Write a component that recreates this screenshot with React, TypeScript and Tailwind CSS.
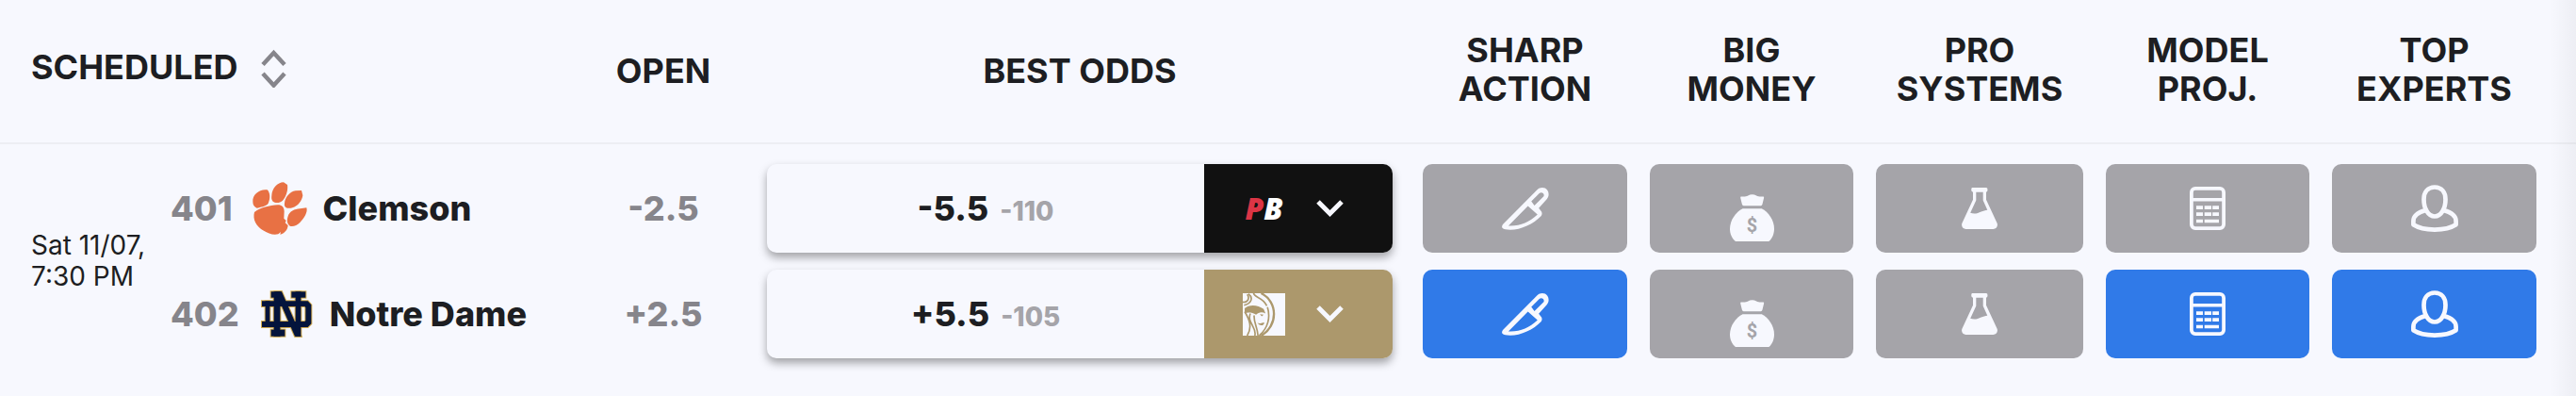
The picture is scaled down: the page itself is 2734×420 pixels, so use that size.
import React from 'react';

type SignalKey = 'sharp' | 'money' | 'systems' | 'model' | 'experts';

interface Team {
  rotation: number;
  name: string;
  logo: React.ReactNode;
  open: string;
  line: string;
  price: string;
  book: string;
  bookClass: string;
  bookLogo: React.ReactNode;
  active: SignalKey[];
}

const SortIcon = () => (
  <svg width="27" height="43" viewBox="0 0 27 43" fill="none" stroke="#86858b" strokeWidth="4.500" aria-hidden="true">
    <path d="M2 18.500 13.500 6 25 18.500M2 28 13.500 40.500 25 28" />
  </svg>
);

const ChevronIcon = () => (
  <svg width="29" height="19" viewBox="0 0 29 19" fill="none" stroke="#f7f8fe" strokeWidth="5" aria-hidden="true">
    <path d="M2 2 14.500 14.500 27 2" />
  </svg>
);

const KnifeIcon = () => (
  <svg width="50" height="45" viewBox="98 86 152 137" fill="#f7f8fe" fillRule="evenodd" aria-hidden="true">
    <path d="M101 205 212 93C221 84 237 84 245 94C251 103 250 115 243 123L217 152L226 164C228 168 228 172 225 177C200 203 160 222 125 222C112 221 104 221 100 217C97 213 98 209 101 205ZM119 209 182 145 213 173C185 199 155 211 119 209ZM193 130 219 104C227 98 237 106 233 114L203 144Z" />
  </svg>
);

const MoneyIcon = () => (
  <svg width="47" height="70" viewBox="824 47 142 211" fill="#f7f8fe" aria-hidden="true">
    <path d="M860 115C868 115 876 116 882 112C890 107 901 107 909 112C915 116 923 115 931 115Q934 115 933 119L928 140Q927 144 923 144H868Q864 144 863 140L858 119Q857 115 860 115Z" />
    <path d="M865 153H926C948 164 966 190 966 218C966 235 959 250 949 258H842C831 249 824 235 824 218C824 190 843 164 865 153Z" />
    <text x="895" y="228" textAnchor="middle" fontSize="60" fill="#a5a4a9" className="font-['Roboto',sans-serif] font-bold">
      $
    </text>
  </svg>
);

const FlaskIcon = () => (
  <svg width="38" height="44" viewBox="0 0 38 44" fill="#f7f8fe" fillRule="evenodd" aria-hidden="true">
    <path d="M11.500 0H26Q27.500 0 27.500 2.300T26 4.700V12.700L37.500 37.500C39 41 36.500 44 33.500 44H4.500C1.500 44-1 41 .5 37.500L12 12.700V4.700Q10.200 4.700 10.200 2.300T11.500 0ZM15.300 4.700V13.500L9.200 26.800C13 28.200 17 27.500 20.700 25.500C23 24.500 25 24.200 27.300 23.700L22.700 13.500V4.700Z" />
  </svg>
);

const CalculatorIcon = () => (
  <svg width="38" height="46" viewBox="0 0 38 46" fill="#f7f8fe" aria-hidden="true">
    <rect x="1.900" y="1.900" width="34.200" height="42.200" rx="4" fill="none" stroke="#f7f8fe" strokeWidth="3.800" />
    <path d="M2 12h34v3.600H2zM7 20.300h7V24H7zM15.700 20.300H23V24h-7.300zM24.200 20.300H31V24h-6.800zM7 27.300h7V31H7zM15.700 27.300H23V31h-7.300zM24.200 27.300H31V31h-6.800zM7 34.700h7v3.600H7zM15.700 34.700H31v3.600H15.700z" />
  </svg>
);

const ExpertIcon = () => (
  <svg width="50" height="50" viewBox="0 0 50 50" fill="none" stroke="#f7f8fe" strokeWidth="4.700" aria-hidden="true">
    <path d="M25 2.500C17.500 2.500 13.500 8 13.500 15.500C13.500 25 18 33.500 25 33.500S36.500 25 36.500 15.500C36.500 8 32.500 2.500 25 2.500Z" />
    <path d="M15.500 27C8 29 2.400 33 2.400 38.500V42.300C13 49.300 37 49.300 47.600 42.300V38.500C47.600 33 42 29 34.500 27" strokeLinejoin="round" />
  </svg>
);

const PawLogo = () => (
  <svg width="60" height="58" viewBox="318 66 180 174" fill="#e87144" aria-hidden="true">
    <path d="M322 132C320 108 345 90 368 94C378 104 378 122 371 137C364 147 346 149 335 152C326 148 322 142 322 132Z" />
    <path d="M382 112C383 90 400 70 420 70L432 78C435 96 427 118 417 128C408 137 393 137 386 131C381 126 381 120 382 112Z" />
    <path d="M423 137C424 118 440 100 458 97L477 96L481 112C478 130 466 146 448 151C436 155 420 152 423 137Z" />
    <path d="M327 165C345 151 375 144 402 142C414 142 422 150 422 162L421 185L428 192L425 199L434 207C433 222 422 233 409 236L411 228L403 235C385 239 371 232 357 224C332 211 321 188 327 165Z" />
    <path d="M434 178C438 163 455 155 472 154L493 151C498 166 484 186 472 198C462 208 450 212 440 209C430 201 430 190 434 178Z" />
  </svg>
);

const MonogramBars = () => (
  <>
    <path d="M19 56H165L176 68V128L165 139H19V121H155L158 118V76L155 73H19z" />
    <rect x="30" y="56" width="14" height="83" />
    <rect x="57" y="26" width="20" height="142" />
    <rect x="48" y="26" width="32" height="19" />
    <rect x="48" y="147" width="44" height="21" />
    <path d="M62 26H82L144 168H124z" />
    <rect x="126" y="26" width="17" height="142" />
    <rect x="113" y="26" width="45" height="19" />
  </>
);

const MonogramLogo = () => (
  <svg width="60" height="50" viewBox="7 22 180 150" aria-hidden="true">
    <g fill="#d0a94e" stroke="#d0a94e" strokeWidth="6">
      <MonogramBars />
    </g>
    <g fill="#04143c">
      <MonogramBars />
    </g>
  </svg>
);

const LionLogo = () => (
  <svg width="45" height="45" viewBox="0 0 134 134" aria-hidden="true">
    <path d="M0 0h134v134H0z" fill="#f7f8fe" />
    <g fill="none" stroke="#ac986c" strokeWidth="5">
      <path d="M58 0C112 26 112 104 58 134" strokeWidth="7" />
      <path d="M34 0C38 16 62 10 76 40" />
      <path d="M0 28C18 30 22 14 14 4M18 2C34 14 28 32 4 38" />
      <path d="M6 58C22 84 30 108 14 134M24 64C12 92 46 108 38 134M78 44C88 76 80 110 52 134" />
      <path d="M36 70C34 92 46 104 48 134" />
    </g>
    <path d="M6 48C20 34 48 36 66 50L72 64C60 57 50 60 42 68C30 60 16 60 6 63zM46 94C56 98 60 92 68 92C68 102 56 106 46 94zM54 66L66 68L60 73z" fill="#ac986c" />
  </svg>
);

const signals: { key: SignalKey; label: [string, string]; width: string; icon: React.ReactNode }[] = [
  { key: 'sharp', label: ['Sharp', 'Action'], width: 'w-[241px]', icon: <KnifeIcon /> },
  { key: 'money', label: ['Big', 'Money'], width: 'w-[240px]', icon: <MoneyIcon /> },
  { key: 'systems', label: ['Pro', 'Systems'], width: 'w-[244px]', icon: <FlaskIcon /> },
  { key: 'model', label: ['Model', 'Proj.'], width: 'w-[240px]', icon: <CalculatorIcon /> },
  { key: 'experts', label: ['Top', 'Experts'], width: 'w-[241px]', icon: <ExpertIcon /> },
];

const teams: Team[] = [
  {
    rotation: 401,
    name: 'Clemson',
    logo: <PawLogo />,
    open: '-2.5',
    line: '-5.5',
    price: '-110',
    book: 'PointsBet',
    bookClass: 'bg-[#111111]',
    bookLogo: (
      <span className="font-['Open_Sans',sans-serif] text-[32px] font-extrabold italic text-white">
        <span className="text-[#dc3545]">P</span>B
      </span>
    ),
    active: [],
  },
  {
    rotation: 402,
    name: 'Notre Dame',
    logo: <MonogramLogo />,
    open: '+2.5',
    line: '+5.5',
    price: '-105',
    book: 'BetMGM',
    bookClass: 'bg-[#ac986c]',
    bookLogo: <LionLogo />,
    active: ['sharp', 'model', 'experts'],
  },
];

const BestOdds: React.FC<{ team: Team }> = ({ team }) => (
  <div className="flex h-[94px] overflow-hidden rounded-[10px] bg-[#f7f8fe] shadow-[0_5px_10px_rgba(0,0,0,0.35)]">
    <div className="flex flex-1 items-baseline justify-center gap-3 leading-[94px]">
      <span className="text-[36px] font-extrabold">{team.line}</span>
      <span className="text-[28px] font-extrabold text-[#a5a4a9]">{team.price}</span>
    </div>
    <button
      type="button"
      aria-label={`${team.book} odds`}
      className={`flex w-[200px] items-center justify-center gap-8 pr-3 ${team.bookClass}`}
    >
      <span className="flex w-[46px] justify-center">{team.bookLogo}</span>
      <ChevronIcon />
    </button>
  </div>
);

export default function App() {
  return (
    <main className="relative min-h-screen bg-[#f7f8fe] font-['Inter',sans-serif] text-[#1d1e22] [font-optical-sizing:none]">
      <table className="w-full min-w-[2400px] table-fixed">
        <colgroup>
          <col className="w-[181px]" />
          <col className="w-[433px]" />
          <col className="w-[180px]" />
          <col />
          {signals.map((signal) => (
            <col key={signal.key} className={signal.width} />
          ))}
          <col className="w-[30px]" />
        </colgroup>
        <thead>
          <tr className="h-[152px] border-b-2 border-[#edeef3] text-[36px] leading-[41px] uppercase">
            <th scope="col" colSpan={2} className="pb-2 pl-[33px] text-left font-bold">
              <button type="button" className="flex items-center gap-6 uppercase">
                Scheduled
                <SortIcon />
              </button>
            </th>
            <th scope="col" className="font-bold">Open</th>
            <th scope="col" className="font-bold">Best Odds</th>
            {signals.map((signal) => (
              <th key={signal.key} scope="col" className="pb-1 font-bold">
                {signal.label[0]}
                <br />
                {signal.label[1]}
              </th>
            ))}
            <td />
          </tr>
        </thead>
        <tbody className="text-[36px]">
          {teams.map((team, i) => (
            <tr key={team.rotation} className={i === 0 ? '*:pt-[21px]' : '*:pt-[18px]'}>
              {i === 0 && (
                <td rowSpan={2} className="pl-[33px] text-[28px] leading-[33px]">
                  Sat 11/07,
                  <br />
                  7:30 PM
                </td>
              )}
              <td>
                <div className="flex items-center font-extrabold whitespace-nowrap">
                  <span className="text-[#86858b]">{team.rotation}</span>
                  <span className="mr-4 ml-5">{team.logo}</span>
                  {team.name}
                </div>
              </td>
              <td className="text-center font-extrabold text-[#86858b]">{team.open}</td>
              <td className="px-5">
                <BestOdds team={team} />
              </td>
              {signals.map((signal) => (
                <td key={signal.key} className="px-3">
                  <button
                    type="button"
                    aria-label={`${signal.label.join(' ')}: ${team.name}`}
                    className={`flex h-[94px] w-full items-center justify-center rounded-[10px] ${
                      team.active.includes(signal.key) ? 'bg-[#307ae8]' : 'bg-[#a5a4a9]'
                    }`}
                  >
                    {signal.icon}
                  </button>
                </td>
              ))}
              <td />
            </tr>
          ))}
        </tbody>
      </table>
      {/* scroll edge fade */}
      <div className="pointer-events-none absolute inset-y-0 right-0 w-7 bg-linear-to-r from-transparent to-black/4" />
    </main>
  );
}
